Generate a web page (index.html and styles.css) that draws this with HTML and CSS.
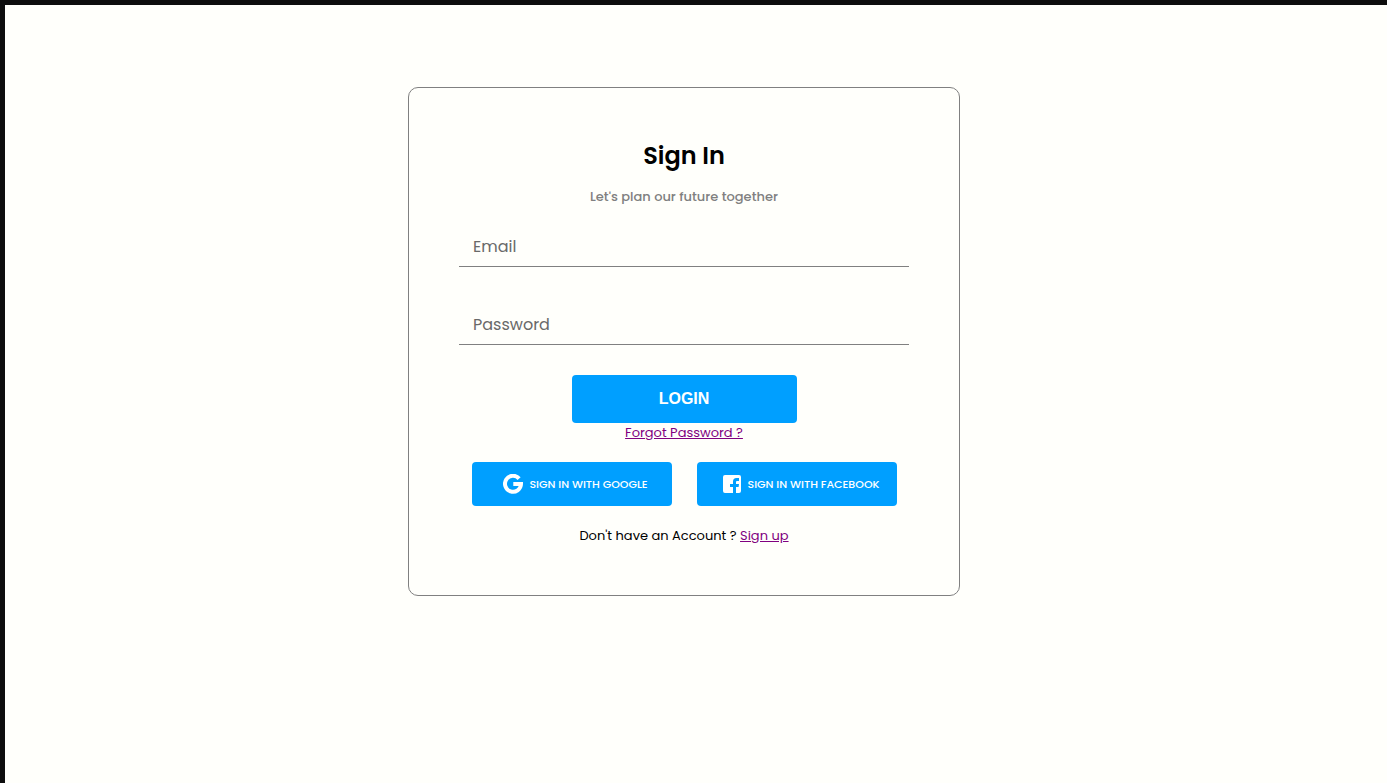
FILE: index.html
```html
<!DOCTYPE html>
<html lang="en">
<head>
    <meta charset="UTF-8">
    <meta name="viewport" content="width=device-width, initial-scale=1.0">
    <title>Sign In</title>
    <link rel="stylesheet" href="styles.css">
</head>
<body>
    <main class="page">
        <form class="signin-card">
            <h1 class="title">Sign In</h1>
            <p class="subtitle">Let's plan our future together</p>

            <input class="field" type="email" id="email" placeholder="Email" aria-label="Email">
            <input class="field" type="password" id="password" placeholder="Password" aria-label="Password">

            <button class="login-btn" type="submit">LOGIN</button>
            <a class="forgot" href="#forgot">Forgot Password ?</a>

            <div class="social">
                <button class="social-btn" type="button">
                    <svg class="icon" viewBox="0 0 20 20" aria-hidden="true">
                        <path fill="none" stroke="#fff" stroke-width="4" d="M16.1 4.6A8 8 0 1 0 18 10H10.3"/>
                    </svg>
                    <span>SIGN IN WITH GOOGLE</span>
                </button>
                <button class="social-btn" type="button">
                    <svg class="icon" viewBox="2 2 20 20" aria-hidden="true">
                        <path fill="#fff" d="M5 3h14a2 2 0 0 1 2 2v14a2 2 0 0 1-2 2h-3v-6h2.600l.4-3h-3v-2a1 1 0 0 1 1-1h2V6h-2.500A3.500 3.500 0 0 0 13 9.500V12h-3v3h3v6H5a2 2 0 0 1-2-2V5a2 2 0 0 1 2-2z"/>
                    </svg>
                    <span>SIGN IN WITH FACEBOOK</span>
                </button>
            </div>

            <p class="signup">Don't have an Account ? <a href="#signup">Sign up</a></p>
        </form>
    </main>
</body>
</html>
```

FILE: styles.css
```css
* {
    box-sizing: border-box;
    margin: 0;
    padding: 0;
}
body {
    min-height: 100vh;
    background-color: #fffffb;
    border-top: 5px solid #0d0d0d;
    border-left: 5px solid #0d0d0d;
    font-family: Poppins, Inter, sans-serif;
    font-size: 13px;
    line-height: 20px;
    color: #000;
}
.page {
    display: flex;
    justify-content: center;
    padding: 82px 24px 40px 0;
}
.signin-card {
    display: flex;
    flex-direction: column;
    align-items: center;
    width: 100%;
    max-width: 552px;
    padding: 50px;
    border: 1px solid gray;
    border-radius: 10px;
}
.title {
    font-size: 24px;
    line-height: 36px;
    font-weight: 600;
}
.subtitle {
    margin: 13px 0 19px;
    color: gray;
    font-weight: 500;
}
.field {
    width: 100%;
    height: 41px;
    padding: 1px 14px 0;
    border: none;
    border-bottom: 1px solid gray;
    background: none;
    font-family: inherit;
    font-size: 16px;
    outline: none;
}
.field + .field {
    margin-top: 37px;
}
.field::placeholder {
    color: #696969;
}
.login-btn {
    width: 50%;
    height: 48px;
    margin-top: 30px;
    border: none;
    border-radius: 4px;
    background-color: #009fff;
    color: #fff;
    font-family: "Liberation Sans", Arial, sans-serif;
    font-size: 16px;
    font-weight: bold;
    cursor: pointer;
}
a {
    color: #800080;
}
.social {
    display: flex;
    flex-wrap: wrap;
    justify-content: center;
    gap: 25px;
    margin: 19px 0 20px;
}
.social-btn {
    display: flex;
    align-items: center;
    justify-content: center;
    gap: 6px;
    width: 200px;
    height: 44px;
    padding-left: 8px;
    border: none;
    border-radius: 4px;
    background-color: #009fff;
    color: #fff;
    font-family: inherit;
    font-size: 11px;
    font-weight: 500;
    white-space: nowrap;
    cursor: pointer;
}
.icon {
    flex: none;
    width: 20px;
    height: 20px;
}
.signup {
    line-height: 19px;
}
```
